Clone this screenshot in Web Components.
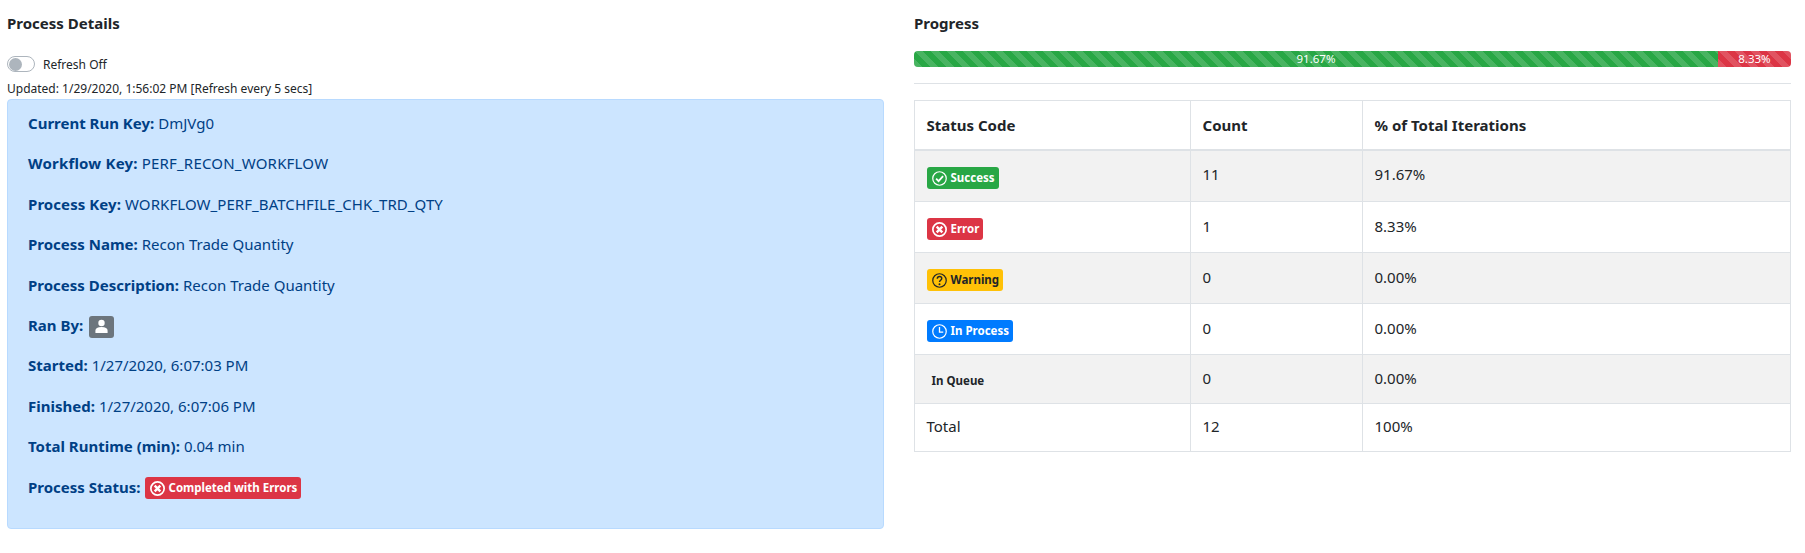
<!DOCTYPE html>
<html>
<head>
<meta charset="utf-8">
<title>Process Details</title>
<style>
html, body { margin: 0; background: #fff; }
body { font-family: "Noto Sans", "Open Sans", sans-serif; color: #212529; }
</style>
</head>
<body>
<process-page></process-page>
<script>
const ICONS = {
	success: `<circle cx="8" cy="8" r="7.2" fill="none" stroke="currentColor" stroke-width="1.3"/><path d="M4.4 8.2 7 10.8l4.8-5.4" fill="none" stroke="currentColor" stroke-width="1.9"/>`,
	error: `<circle cx="8" cy="8" r="7.1" fill="none" stroke="currentColor" stroke-width="1.8"/><path d="M5 5l6 6M11 5l-6 6" fill="none" stroke="currentColor" stroke-width="2.6"/>`,
	warning: `<circle cx="8" cy="8" r="7.2" fill="none" stroke="currentColor" stroke-width="1.3"/><path d="M5.6 6.200c0-1.500 1.100-2.400 2.500-2.400s2.300.9 2.300 2.100c0 1.800-2.400 1.900-2.400 3.700" fill="none" stroke="currentColor" stroke-width="1.5"/><circle cx="8" cy="12" r="1.050" fill="currentColor"/>`,
	process: `<circle cx="8" cy="8" r="7.2" fill="none" stroke="currentColor" stroke-width="1.3"/><path d="M8 3.300V8.700h4" fill="none" stroke="currentColor" stroke-width="1.4"/>`
};

class StatusBadge extends HTMLElement {
	static get styles() {
		return `
		<style>
		:host{
			display: inline-flex;
			align-items: center;
			gap: 4px;
			height: 22px;
			box-sizing: border-box;
			padding: 0 4px 0 5px;
			border-radius: 3px;
			font-size: 11.5px;
			font-weight: 700;
			vertical-align: middle;
			white-space: nowrap;
		}
		:host([type=success]){ background: #28a745; color: #fff; }
		:host([type=error]){ background: #dc3545; color: #fff; }
		:host([type=warning]){ background: #ffc107; color: #212529; }
		:host([type=process]){ background: #007bff; color: #fff; }
		svg{ width: 15px; height: 15px; flex: none; margin-top: 1px; }
		span{ margin-top: -2px; }
		</style>
		`
	}

	constructor() {
		super();
		this.attachShadow({ mode: 'open' });
		const icon = ICONS[this.getAttribute('type')] || '';
		this.shadowRoot.innerHTML = this.constructor.styles
			+ (icon ? `<svg viewBox="0 0 16 16">${icon}</svg>` : '')
			+ `<span><slot></slot></span>`;
	}
}
customElements.define('status-badge', StatusBadge);

class DetailRow extends HTMLElement {
	constructor() {
		super();
		this.attachShadow({ mode: 'open' });
		this.shadowRoot.innerHTML = `
		<style>
		:host{ display: flex; align-items: center; gap: 4px; height: 24px; margin-bottom: 16.4px; font-size: 15px; }
		b{ font-weight: 700; }
		</style>
		<b>${this.getAttribute('label')}:</b><slot></slot>`;
	}
}
customElements.define('detail-row', DetailRow);

class RefreshToggle extends HTMLElement {
	constructor() {
		super();
		this.attachShadow({ mode: 'open' });
		this.shadowRoot.innerHTML = `
		<style>
		:host{ display: flex; align-items: center; gap: 8px; font-size: 12px; color: #212529; }
		.track{ width: 28px; height: 16px; box-sizing: border-box; border: 1px solid #adb5bd; border-radius: 8px; background: #fff; padding: .5px; }
		.knob{ width: 13px; height: 13px; border-radius: 50%; background: #adb5bd; }
		</style>
		<div class="track"><div class="knob"></div></div><slot></slot>`;
	}
}
customElements.define('refresh-toggle', RefreshToggle);

class ProcessDetails extends HTMLElement {
	constructor() {
		super();
		this.attachShadow({ mode: 'open' });
		this.shadowRoot.innerHTML = `
		<style>
		:host{ display: block; }
		h2{ margin: 0; height: 24px; line-height: 24px; font-size: 15px; font-weight: 700; }
		refresh-toggle{ margin-top: 21px; height: 16px; }
		.updated{ margin-top: 8px; height: 18px; line-height: 18px; font-size: 12px; }
		.alert{ margin-top: 1px; height: 430px; box-sizing: border-box; padding: 11px 20px; background: #cce5ff; border: 1px solid #b8daff; border-radius: 4px; color: #004085; }
		.avatar{ display: inline-flex; align-items: center; justify-content: center; width: 25px; height: 22px; margin: 4px 0 0 2px; background: #6c757d; border-radius: 3px; color: #fff; }
		.status{ margin-top: 3px; }
		</style>
		<h2>Process Details</h2>
		<refresh-toggle>Refresh Off</refresh-toggle>
		<div class="updated">Updated: 1/29/2020, 1:56:02 PM [Refresh every 5 secs]</div>
		<div class="alert">
			<detail-row label="Current Run Key">DmJVg0</detail-row>
			<detail-row label="Workflow Key" style="letter-spacing:.2px">PERF_RECON_WORKFLOW</detail-row>
			<detail-row label="Process Key" style="letter-spacing:.07px">WORKFLOW_PERF_BATCHFILE_CHK_TRD_QTY</detail-row>
			<detail-row label="Process Name">Recon Trade Quantity</detail-row>
			<detail-row label="Process Description">Recon Trade Quantity</detail-row>
			<detail-row label="Ran By"><span class="avatar"><svg width="15" height="15" viewBox="0 0 16 16" fill="currentColor"><circle cx="8" cy="4.200" r="3.400"/><path d="M1.500 15v-2.500C1.500 9.800 3.800 8.600 8 8.600s6.500 1.200 6.500 3.900V15z"/></svg></span></detail-row>
			<detail-row label="Started">1/27/2020, 6:07:03 PM</detail-row>
			<detail-row label="Finished">1/27/2020, 6:07:06 PM</detail-row>
			<detail-row label="Total Runtime (min)">0.04 min</detail-row>
			<detail-row label="Process Status"><status-badge class="status" type="error">Completed with Errors</status-badge></detail-row>
		</div>`;
	}
}
customElements.define('process-details', ProcessDetails);

class StripedProgress extends HTMLElement {
	constructor() {
		super();
		this.attachShadow({ mode: 'open' });
		this.shadowRoot.innerHTML = `
		<style>
		:host{ display: flex; height: 16px; border-radius: 4px; overflow: hidden; font-size: 11.5px; line-height: 16px; color: #fff; text-align: center; }
		div{
			background-image: linear-gradient(45deg, rgba(255,255,255,.15) 25%, transparent 25%, transparent 50%, rgba(255,255,255,.15) 50%, rgba(255,255,255,.15) 75%, transparent 75%, transparent);
			background-size: 16px 16px;
		}
		.ok{ width: 91.67%; background-color: #28a745; }
		.bad{ width: 8.33%; background-color: #dc3545; }
		</style>
		<div class="ok">91.67%</div><div class="bad">8.33%</div>`;
	}
}
customElements.define('striped-progress', StripedProgress);

class StatusTable extends HTMLElement {
	constructor() {
		super();
		this.attachShadow({ mode: 'open' });
		this.shadowRoot.innerHTML = `
		<style>
		:host{ display: block; font-size: 15px; }
		table{ width: 100%; border-collapse: collapse; table-layout: fixed; }
		th, td{ box-sizing: border-box; border: 1px solid #dee2e6; padding: 0 11.5px; text-align: left; vertical-align: middle; }
		th{ height: 49px; border-bottom-width: 2px; font-weight: 700; }
		td{ height: 51px; padding-bottom: 3px; }
		td.tag{ padding-top: 4px; padding-bottom: 0; }
		tbody tr:nth-child(odd) td{ background: #f2f2f2; }
		tr.first td{ height: 52px; }
		tr.queue td{ height: 49px; }
		tr.total td{ background: #fff !important; height: 48px; }
		</style>
		<table>
			<colgroup><col style="width:276px"><col style="width:172px"><col></colgroup>
			<thead><tr><th>Status Code</th><th>Count</th><th>% of Total Iterations</th></tr></thead>
			<tbody>
				<tr class="first"><td class="tag"><status-badge type="success">Success</status-badge></td><td>11</td><td>91.67%</td></tr>
				<tr><td class="tag"><status-badge type="error">Error</status-badge></td><td>1</td><td>8.33%</td></tr>
				<tr><td class="tag"><status-badge type="warning">Warning</status-badge></td><td>0</td><td>0.00%</td></tr>
				<tr><td class="tag"><status-badge type="process">In Process</status-badge></td><td>0</td><td>0.00%</td></tr>
				<tr class="queue"><td class="tag"><status-badge type="queue">In Queue</status-badge></td><td>0</td><td>0.00%</td></tr>
				<tr class="total"><td>Total</td><td>12</td><td>100%</td></tr>
			</tbody>
		</table>`;
	}
}
customElements.define('status-table', StatusTable);

class ProcessPage extends HTMLElement {
	constructor() {
		super();
		this.attachShadow({ mode: 'open' });
		this.shadowRoot.innerHTML = `
		<style>
		:host{ display: grid; grid-template-columns: 877px 877px; column-gap: 30px; padding: 11px 14px 0 7px; height: 553px; box-sizing: border-box; }
		h2{ margin: 0; height: 24px; line-height: 24px; font-size: 15px; font-weight: 700; }
		striped-progress{ margin-top: 16px; }
		hr{ margin: 16px 0; border: 0; border-top: 1px solid #dee2e6; }
		</style>
		<process-details></process-details>
		<section>
			<h2>Progress</h2>
			<striped-progress></striped-progress>
			<hr>
			<status-table></status-table>
		</section>`;
	}
}
customElements.define('process-page', ProcessPage);
</script>
</body>
</html>
